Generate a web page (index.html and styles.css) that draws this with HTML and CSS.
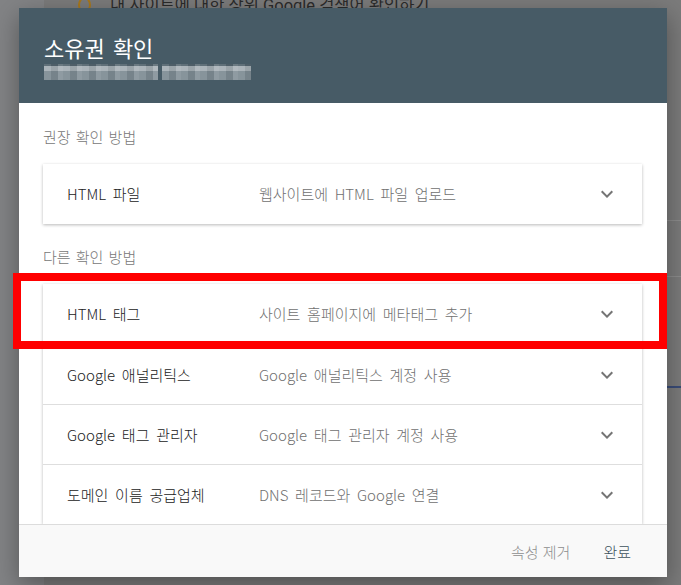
FILE: index.html
```html
<!DOCTYPE html>
<html lang="ko">
<head>
    <meta charset="UTF-8">
    <title>소유권 확인</title>
    <link rel="stylesheet" href="styles.css">
</head>
<body>
    <div class="page">
        <div class="page-side"></div>
        <div class="page-hint"><span class="hint-ring"></span>내 사이트에 대한 상위 Google 검색어 확인하기</div>
        <div class="page-rule rule-a"></div>
        <div class="page-rule rule-b"></div>
        <div class="page-rule rule-blue"></div>
    </div>

    <div class="dialog">
        <div class="dialog-head">
            <h1>소유권 확인</h1>
            <div class="site-url"><span class="blur-a"></span><span class="blur-b"></span></div>
        </div>

        <div class="dialog-body">
            <p class="group-label">권장 확인 방법</p>
            <div class="method-card">
                <div class="method-row">
                    <span class="method-name">HTML 파일</span>
                    <span class="method-desc">웹사이트에 HTML 파일 업로드</span>
                    <svg class="chevron" viewBox="0 0 24 24"><path d="M7.41 8.59L12 13.17l4.59-4.58L18 10l-6 6-6-6 1.41-1.41z"/></svg>
                </div>
            </div>

            <p class="group-label second">다른 확인 방법</p>
            <div class="method-card">
                <div class="method-row">
                    <span class="method-name">HTML 태그</span>
                    <span class="method-desc">사이트 홈페이지에 메타태그 추가</span>
                    <svg class="chevron" viewBox="0 0 24 24"><path d="M7.41 8.59L12 13.17l4.59-4.58L18 10l-6 6-6-6 1.41-1.41z"/></svg>
                </div>
                <div class="method-row">
                    <span class="method-name">Google 애널리틱스</span>
                    <span class="method-desc">Google 애널리틱스 계정 사용</span>
                    <svg class="chevron" viewBox="0 0 24 24"><path d="M7.41 8.59L12 13.17l4.59-4.58L18 10l-6 6-6-6 1.41-1.41z"/></svg>
                </div>
                <div class="method-row">
                    <span class="method-name">Google 태그 관리자</span>
                    <span class="method-desc">Google 태그 관리자 계정 사용</span>
                    <svg class="chevron" viewBox="0 0 24 24"><path d="M7.41 8.59L12 13.17l4.59-4.58L18 10l-6 6-6-6 1.41-1.41z"/></svg>
                </div>
                <div class="method-row">
                    <span class="method-name">도메인 이름 공급업체</span>
                    <span class="method-desc">DNS 레코드와 Google 연결</span>
                    <svg class="chevron" viewBox="0 0 24 24"><path d="M7.41 8.59L12 13.17l4.59-4.58L18 10l-6 6-6-6 1.41-1.41z"/></svg>
                </div>
            </div>
        </div>

        <div class="dialog-foot">
            <button class="btn btn-muted">속성 제거</button>
            <button class="btn btn-done">완료</button>
        </div>
    </div>

    <div class="highlight"></div>
</body>
</html>
```

FILE: styles.css
```css
html, body {
    margin: 0;
    height: 100%;
}
body {
    font-family: "Noto Sans CJK KR", Roboto, sans-serif;
    font-weight: 300;
    background-color: #7b7b7b;
    overflow: hidden;
    position: relative;
}
.page-side {
    position: absolute;
    left: 0;
    top: 0;
    bottom: 0;
    width: 44px;
    background-color: #828385;
}
.page-hint {
    position: absolute;
    top: -4px;
    left: 78px;
    font-family: Roboto, "Noto Sans CJK KR", sans-serif;
    font-weight: 400;
    font-size: 16.5px;
    line-height: 20px;
    color: #2b2b2b;
    white-space: nowrap;
}
.hint-ring {
    display: inline-block;
    width: 9px;
    height: 12px;
    border: 2px solid #a8781c;
    border-radius: 50%;
    margin-right: 19px;
    vertical-align: -2px;
}
.page-rule {
    position: absolute;
    right: 0;
    width: 14px;
    height: 1px;
    background-color: #8c8c8c;
}
.rule-a { top: 220px; }
.rule-b { top: 276px; }
.rule-blue {
    top: 386px;
    height: 2px;
    background-color: #3a4c78;
}

.dialog {
    position: absolute;
    left: 19px;
    top: 8px;
    width: 648px;
    height: 569px;
    display: flex;
    flex-direction: column;
    background: white;
    box-shadow: 0 8px 24px rgba(0, 0, 0, 0.35);
}
.dialog-head {
    height: 95px;
    box-sizing: border-box;
    padding: 25px 25px 0;
    background-color: #475b66;
    color: white;
}
.dialog-head h1 {
    margin: 0;
    font-size: 22px;
    font-weight: 400;
    line-height: 29px;
    word-spacing: 2px;
}
.site-url {
    display: flex;
    gap: 4px;
    margin-top: 2px;
    height: 16px;
}
.site-url span {
    display: block;
    height: 16px;
    background:
        repeating-linear-gradient(90deg, rgba(255, 255, 255, 0.08) 0 7px, rgba(0, 0, 0, 0.06) 7px 14px, rgba(255, 255, 255, 0.14) 14px 19px),
        linear-gradient(#53646e 0 2px, #a4aeb4 2px 7px, #7d8b93 7px 100%);
}
.blur-a { width: 114px; }
.blur-b { width: 89px; }

.dialog-body {
    flex: 1;
    overflow: hidden;
    padding: 24px 25px 0 24px;
}
.group-label {
    margin: 0;
    font-size: 15px;
    line-height: 20px;
    word-spacing: 1px;
    color: #777;
}
.group-label.second {
    margin-top: 23px;
}
.method-card {
    margin-top: 17px;
    background: white;
    box-shadow: 0 1px 3px rgba(0, 0, 0, 0.28);
}
.method-row {
    display: flex;
    align-items: center;
    height: 60px;
    box-sizing: border-box;
    padding: 0 23px 0 24px;
    font-size: 15px;
    line-height: 20px;
    word-spacing: 2.5px;
}
.method-row + .method-row {
    border-top: 1px solid #dedede;
}
.method-name {
    width: 192px;
    color: #222;
}
.method-desc {
    flex: 1;
    color: #707070;
}
.chevron {
    width: 24px;
    height: 24px;
    fill: #757575;
}

.dialog-foot {
    height: 53px;
    box-sizing: border-box;
    border-top: 1px solid #dcdcdc;
    background-color: #f9f9f9;
    display: flex;
    justify-content: flex-end;
    align-items: center;
    padding-right: 18px;
}
.btn {
    background: none;
    border: none;
    font-family: inherit;
    font-weight: 300;
    font-size: 15px;
    padding: 8px 16px;
    cursor: pointer;
}
.btn-muted {
    color: #8e8e8e;
    margin-right: 1px;
}
.btn-done {
    color: #3d525d;
    padding-right: 18px;
    padding-left: 16px;
}

.highlight {
    position: absolute;
    left: 13px;
    top: 273px;
    width: 654px;
    height: 76px;
    box-sizing: border-box;
    border: 8px solid #ff0000;
}
```
